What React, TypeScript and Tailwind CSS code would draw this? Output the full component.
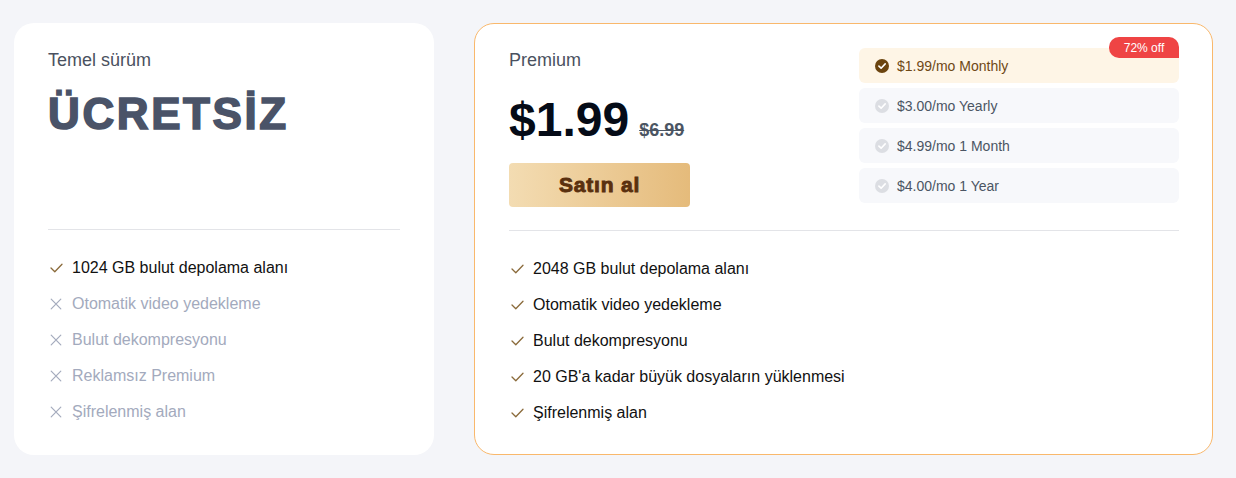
import React from "react";

const Check = ({ className = "" }: { className?: string }) => (
  <svg width="13" height="10" viewBox="0 0 13 10" className={className} fill="none">
    <path d="M1 5 L4.8 8.8 L12 1.2" stroke="#8a6a3a" strokeWidth="1.3" strokeLinecap="round" strokeLinejoin="round" />
  </svg>
);

const Cross = () => (
  <svg width="12" height="12" viewBox="0 0 12 12" fill="none">
    <path d="M1.2 1.2 L10.8 10.8 M10.8 1.2 L1.2 10.8" stroke="#a4abbd" strokeWidth="1.2" strokeLinecap="round" />
  </svg>
);

const CircleCheck = ({ active }: { active: boolean }) => (
  <svg width="14" height="14" viewBox="0 0 14 14">
    <circle cx="7" cy="7" r="7" fill={active ? "#6b440f" : "#dcdee3"} />
    <path d="M3.9 7.1 L6.1 9.2 L10.2 4.9" stroke="#fff" strokeWidth="1.6" fill="none" strokeLinecap="round" strokeLinejoin="round" />
  </svg>
);

const freeFeatures: { text: string; ok: boolean }[] = [
  { text: "1024 GB bulut depolama alanı", ok: true },
  { text: "Otomatik video yedekleme", ok: false },
  { text: "Bulut dekompresyonu", ok: false },
  { text: "Reklamsız Premium", ok: false },
  { text: "Şifrelenmiş alan", ok: false },
];

const premiumFeatures = [
  "2048 GB bulut depolama alanı",
  "Otomatik video yedekleme",
  "Bulut dekompresyonu",
  "20 GB'a kadar büyük dosyaların yüklenmesi",
  "Şifrelenmiş alan",
];

const plans = [
  { text: "$1.99/mo Monthly", active: true },
  { text: "$3.00/mo Yearly", active: false },
  { text: "$4.99/mo 1 Month", active: false },
  { text: "$4.00/mo 1 Year", active: false },
];

export default function App() {
  return (
    <div
      className="w-[1236px] h-[478px] bg-[#f4f5f9] flex gap-[40px] pl-[14px] pt-[23px]"
      style={{ fontFamily: '"Liberation Sans", Arial, sans-serif' }}
    >
      {/* Free card */}
      <div className="w-[420px] h-[432px] bg-white rounded-[20px] px-[34px] pt-[23px] flex flex-col">
        <div className="h-[162px]">
          <div className="text-[18px] leading-[28px] text-[#4a5160]">Temel sürüm</div>
          <div className="mt-[18px] text-[44px] leading-[44px] font-bold tracking-[2.6px] text-[#4a5368] [-webkit-text-stroke:1.6px_#4a5368]">
            ÜCRETSİZ
          </div>
        </div>
        <div className="mt-[21px] h-px bg-[#e3e4e8]" />
        <div className="mt-[26px] flex flex-col gap-[12px]">
          {freeFeatures.map((f) => (
            <div key={f.text} className="flex items-center h-[24px]">
              <div className="w-[24px] flex items-center pl-[2px]">
                {f.ok ? <Check /> : <Cross />}
              </div>
              <span className={`text-[16px] leading-[24px] ${f.ok ? "text-[#111111]" : "text-[#a3aabd]"}`}>
                {f.text}
              </span>
            </div>
          ))}
        </div>
      </div>

      {/* Premium card */}
      <div className="w-[739px] h-[432px] bg-white rounded-[20px] border border-[#f9b86c] pl-[34px] pr-[33px] pt-[22px] flex flex-col">
        <div className="h-[162px] flex justify-between items-start">
          <div className="flex flex-col">
            <div className="text-[18px] leading-[28px] text-[#4a5160]">Premium</div>
            <div className="mt-[22px] flex items-baseline">
              <span className="text-[48px] leading-[48px] font-bold text-[#050b17]">$1.99</span>
              <span className="ml-[10px] text-[18px] font-bold text-[#4b5563] line-through">$6.99</span>
            </div>
            <button className="mt-[19px] w-[181px] h-[44px] rounded-[4px] bg-gradient-to-r from-[#f3dcb2] to-[#e5bb7b] text-[21px] font-bold text-[#5a300f] tracking-[0.8px] [-webkit-text-stroke:0.9px_#5a300f]">
              Satın al
            </button>
          </div>
          <div className="relative mt-[2px] w-[320px] flex flex-col gap-[5px]">
            <div className="absolute right-0 top-[-11px] w-[70px] h-[21px] bg-[#ef4444] rounded-tl-[10px] rounded-tr-[10px] rounded-bl-[10px] flex items-center justify-center text-[12px] text-white z-10">
              72% off
            </div>
            {plans.map((p) => (
              <div
                key={p.text}
                className={`h-[35px] rounded-[6px] flex items-center pl-[16px] gap-[8px] ${
                  p.active ? "bg-[#fef5e6]" : "bg-[#f7f8fb]"
                }`}
              >
                <CircleCheck active={p.active} />
                <span className={`text-[14px] pt-[1px] ${p.active ? "text-[#6e4815]" : "text-[#4b5563]"}`}>{p.text}</span>
              </div>
            ))}
          </div>
        </div>
        <div className="mt-[22px] h-px bg-[#e3e4e8]" />
        <div className="mt-[26px] flex flex-col gap-[12px]">
          {premiumFeatures.map((t) => (
            <div key={t} className="flex items-center h-[24px]">
              <div className="w-[24px] flex items-center pl-[2px]">
                <Check />
              </div>
              <span className="text-[16px] leading-[24px] text-[#111111]">{t}</span>
            </div>
          ))}
        </div>
      </div>
    </div>
  );
}
